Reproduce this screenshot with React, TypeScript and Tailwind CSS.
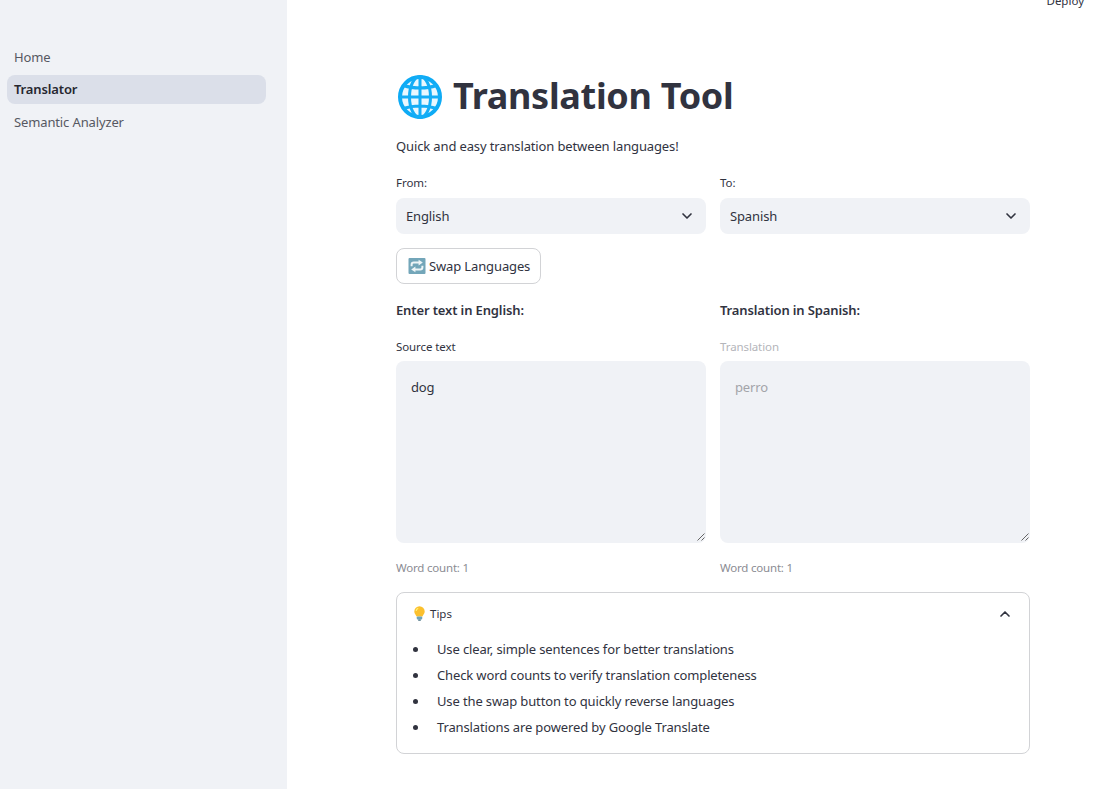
import { ChevronDown, ChevronUp } from "lucide-react";

const font = { fontFamily: '"Noto Sans", sans-serif' };

function GlobeIcon() {
  return (
    <svg width="46" height="46" viewBox="0 0 46 46" className="shrink-0">
      <circle cx="23" cy="23" r="20" fill="#eaf7fe" stroke="#0eabf5" strokeWidth="4" />
      <g fill="none" stroke="#14adf6" strokeWidth="3">
        <ellipse cx="23" cy="23" rx="10.5" ry="20.5" />
        <path d="M23 3v40M3 23h40M6.5 11.5c9.5 3.4 23.5 3.4 33 0M6.5 34.5c9.5-3.4 23.5-3.4 33 0" />
      </g>
    </svg>
  );
}

function SwapIcon() {
  return (
    <svg width="18" height="18" viewBox="0 0 18 18" className="shrink-0">
      <rect x="0.5" y="1" width="17" height="16" rx="1" fill="#73a6b9" />
      <g fill="none" stroke="#eef5f7" strokeWidth="2">
        <path d="M3.6 9.2V7.8c0-1.3.9-2.2 2.2-2.2h5.4" />
        <path d="M14.4 8.8v1.4c0 1.3-.9 2.2-2.2 2.2H6.8" />
      </g>
      <path d="M10.6 2.7l4.2 2.9-4.2 2.9zM7.4 9.5l-4.2 2.9 4.2 2.9z" fill="#eef5f7" />
    </svg>
  );
}

function BulbIcon() {
  return (
    <svg width="11" height="15" viewBox="0 0 11 15" className="shrink-0">
      <path d="M5.5.3A5.2 5.2 0 0 0 .3 5.5c0 2.1 1.5 3 2.2 5h6c.7-2 2.2-2.9 2.2-5A5.2 5.2 0 0 0 5.5.3z" fill="#fbc02d" />
      <path d="M4.2 2.2C3 2.7 2.2 3.7 2.2 5" stroke="#fff176" strokeWidth="1.2" fill="none" />
      <rect x="2.8" y="10.5" width="5.4" height="3" rx="0.8" fill="#6fa3b8" />
      <rect x="4" y="13.4" width="3" height="1.4" rx="0.7" fill="#456f80" />
    </svg>
  );
}

function Select({ label, value }: { label: string; value: string }) {
  return (
    <div className="w-[310px]">
      <div className="h-[18px] text-[11.5px] leading-[18px] tracking-[-0.05px] text-[#31333f]">{label}</div>
      <div className="mt-[6px] flex h-[36px] items-center justify-between rounded-lg bg-[#f0f2f6] pl-[10px] pr-[11px] text-[13px] tracking-[-0.13px] text-[#31333f]">
        <span className="pt-[1px]">{value}</span>
        <ChevronDown size={16} strokeWidth={2.5} />
      </div>
    </div>
  );
}

function TextBox({
  label,
  value,
  muted,
}: {
  label: string;
  value: string;
  muted?: boolean;
}) {
  return (
    <div className="w-[310px]">
      <div className={`h-[18px] text-[11.5px] leading-[18px] tracking-[-0.1px] ${muted ? "text-[#b4b5ba]" : "text-[#31333f]"}`}>
        {label}
      </div>
      <div className={`relative mt-[5px] h-[182px] rounded-lg bg-[#f0f2f6] px-[15px] py-[16px] text-[13px] leading-[20px] tracking-[-0.13px] ${muted ? "text-[#a3a4a9]" : "text-[#31333f]"}`}>
        {value}
        <svg width="8" height="8" viewBox="0 0 8 8" className="absolute bottom-[2px] right-[1px]">
          <path d="M0.5 7.5L7.5 0.5M4.5 7.5L7.5 4.5" stroke="#555" strokeWidth="0.9" />
        </svg>
      </div>
      <div className="mt-[17px] h-[16px] text-[11.5px] leading-[16px] tracking-[-0.2px] text-[#8b8c93]">Word count: 1</div>
    </div>
  );
}

const tips = [
  "Use clear, simple sentences for better translations",
  "Check word counts to verify translation completeness",
  "Use the swap button to quickly reverse languages",
  "Translations are powered by Google Translate",
];

export default function App() {
  return (
    <div style={font} className="flex h-[789px] w-[1095px] overflow-hidden bg-white text-[#31333f]">
      <aside className="w-[287px] shrink-0 bg-[#f0f2f6] px-[7px] pt-[42px]">
        <div className="flex w-[259px] flex-col gap-[4px] text-[13px] tracking-[-0.13px]">
          <div className="flex h-[29px] items-center px-[7px] pt-[2px] text-[#565862]">Home</div>
          <div className="flex h-[29px] items-center rounded-lg bg-[#dbdfe9] px-[7px] pt-[1px] font-semibold text-[#262730]">Translator</div>
          <div className="flex h-[29px] items-center px-[7px] text-[#565862]">Semantic Analyzer</div>
        </div>
      </aside>

      <main className="relative flex-1 pl-[109px]">
        <div className="absolute right-[11px] top-[-7px] text-[11.5px] leading-[16px] text-[#31333f]">Deploy</div>
        <div className="w-[634px] pt-[74px]">
          <h1 className="flex h-[46px] items-center gap-[10px] pl-[1px] text-[36px] font-bold tracking-[-0.3px] text-[#31333f]">
            <GlobeIcon />
            <span className="pb-[2px]">Translation Tool</span>
          </h1>
          <p className="mt-[16px] h-[20px] text-[13px] leading-[20px] tracking-[-0.13px]">Quick and easy translation between languages!</p>

          <div className="mt-[18px] flex gap-[14px]">
            <Select label="From:" value="English" />
            <Select label="To:" value="Spanish" />
          </div>

          <button className="mt-[14px] flex h-[36px] w-[145px] items-center gap-[3px] rounded-lg border border-[#d2d3d6] bg-white pl-[11px] text-[13px] tracking-[-0.13px]">
            <SwapIcon />
            <span className="pt-[1px]">Swap Languages</span>
          </button>

          <div className="mt-[16px] flex gap-[14px] text-[13px] font-semibold leading-[20px] tracking-[-0.13px]">
            <div className="w-[310px]">Enter text in English:</div>
            <div className="w-[310px]">Translation in Spanish:</div>
          </div>

          <div className="mt-[18px] flex gap-[14px]">
            <TextBox label="Source text" value="dog" />
            <TextBox label="Translation" value="perro" muted />
          </div>

          <div className="mt-[16px] h-[162px] rounded-lg border border-[#d2d3d6] px-[15px]">
            <div className="flex h-[41px] items-center justify-between pr-[1px]">
              <div className="flex items-center text-[11.5px]">
                <span className="ml-[2px] mr-[5px]">
                  <BulbIcon />
                </span>
                <span>Tips</span>
              </div>
              <ChevronUp size={16} strokeWidth={2.5} />
            </div>
            <ul className="mt-[5px] flex flex-col gap-[6px] text-[13px] leading-[20px] tracking-[-0.13px]">
              {tips.map((tip) => (
                <li key={tip} className="flex items-center">
                  <span className="ml-[1px] h-[5px] w-[5px] rounded-full bg-[#31333f]" />
                  <span className="ml-[19px]">{tip}</span>
                </li>
              ))}
            </ul>
          </div>
        </div>
      </main>
    </div>
  );
}
